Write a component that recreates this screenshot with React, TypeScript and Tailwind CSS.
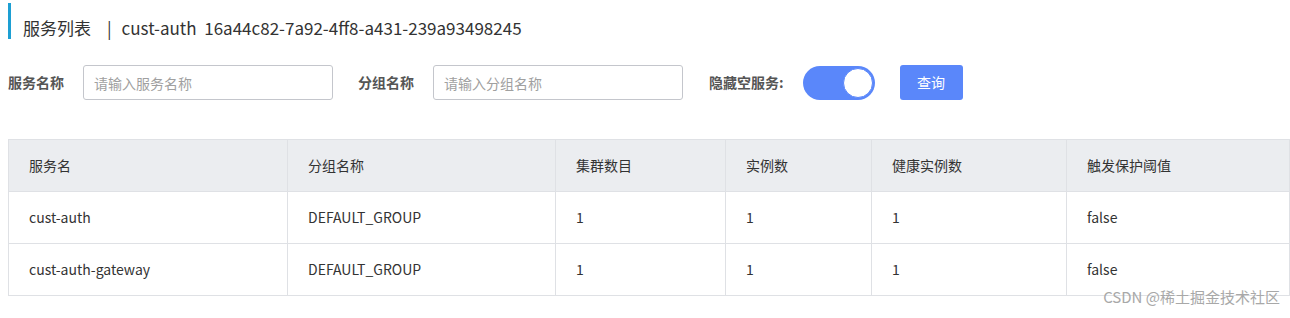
import React from "react";

const cols = [
  { title: "服务名", w: 279 },
  { title: "分组名称", w: 268 },
  { title: "集群数目", w: 170 },
  { title: "实例数", w: 146 },
  { title: "健康实例数", w: 195 },
  { title: "触发保护阈值", w: 223 },
];

const rows = [
  ["cust-auth", "DEFAULT_GROUP", "1", "1", "1", "false"],
  ["cust-auth-gateway", "DEFAULT_GROUP", "1", "1", "1", "false"],
];

const font = { fontFamily: '"Noto Sans CJK SC", "Noto Sans", sans-serif' };

function Field({ label, placeholder }: { label: string; placeholder: string }) {
  return (
    <div className="flex items-center">
      <span className="w-[75px] text-[14px] font-bold text-[#555]">{label}</span>
      <input
        placeholder={placeholder}
        className="h-[35px] w-[250px] rounded-[3px] border border-[#c4c6cc] px-[10px] text-[14px] text-[#333] outline-none placeholder:text-[#a0a0a0]"
        style={font}
      />
    </div>
  );
}

export default function App() {
  return (
    <div className="relative h-[318px] w-[1290px] overflow-hidden bg-white text-[#333]" style={font}>
      <div className="flex pt-[3px] pl-[8px]">
        <div className="h-[36px] w-[3px] bg-[#1d9fd3]" />
        <h1 className="flex pt-[13px] pl-[12px] text-[17px] leading-[24px] text-[#333]">
          <span>服务列表</span>
          <span className="mr-[10px] ml-[16px]">|</span>
          <span>cust-auth&nbsp;&nbsp;16a44c82-7a92-4ff8-a431-239a93498245</span>
        </h1>
      </div>

      <div className="mt-[25px] flex items-center pl-[8px]">
        <Field label="服务名称" placeholder="请输入服务名称" />
        <div className="w-[25px]" />
        <Field label="分组名称" placeholder="请输入分组名称" />
        <span className="ml-[26px] text-[14px] font-bold text-[#555]">隐藏空服务:</span>
        <div className="ml-[19px] flex h-[34px] w-[72px] items-center justify-end rounded-full bg-[#5a87fa] p-[2px]">
          <div className="h-[30px] w-[30px] rounded-full border border-[#5a87fa] bg-white" />
        </div>
        <button className="ml-[25px] h-[35px] w-[63px] rounded-[3px] bg-[#5a87fa] text-[14px] text-white">
          查询
        </button>
      </div>

      <table className="mt-[39px] ml-[8px] table-fixed border-collapse text-[14px]" style={{ width: 1281 }}>
        <colgroup>
          {cols.map((c) => (
            <col key={c.title} style={{ width: c.w }} />
          ))}
        </colgroup>
        <thead>
          <tr className="h-[52px] bg-[#ebedf0]">
            {cols.map((c) => (
              <th key={c.title} className="border border-[#dfe1e5] pl-[20px] text-left font-normal text-[#333]">
                {c.title}
              </th>
            ))}
          </tr>
        </thead>
        <tbody>
          {rows.map((r, i) => (
            <tr key={i} className="h-[52px]">
              {r.map((v, j) => (
                <td key={j} className="border border-[#dfe1e5] pl-[20px] text-[#333]">
                  {v}
                </td>
              ))}
            </tr>
          ))}
        </tbody>
      </table>

      <div className="absolute top-[286px] right-[10px] whitespace-nowrap text-[15px] leading-[22px] text-[#a8a8a8]">
        CSDN @稀土掘金技术社区
      </div>
    </div>
  );
}
